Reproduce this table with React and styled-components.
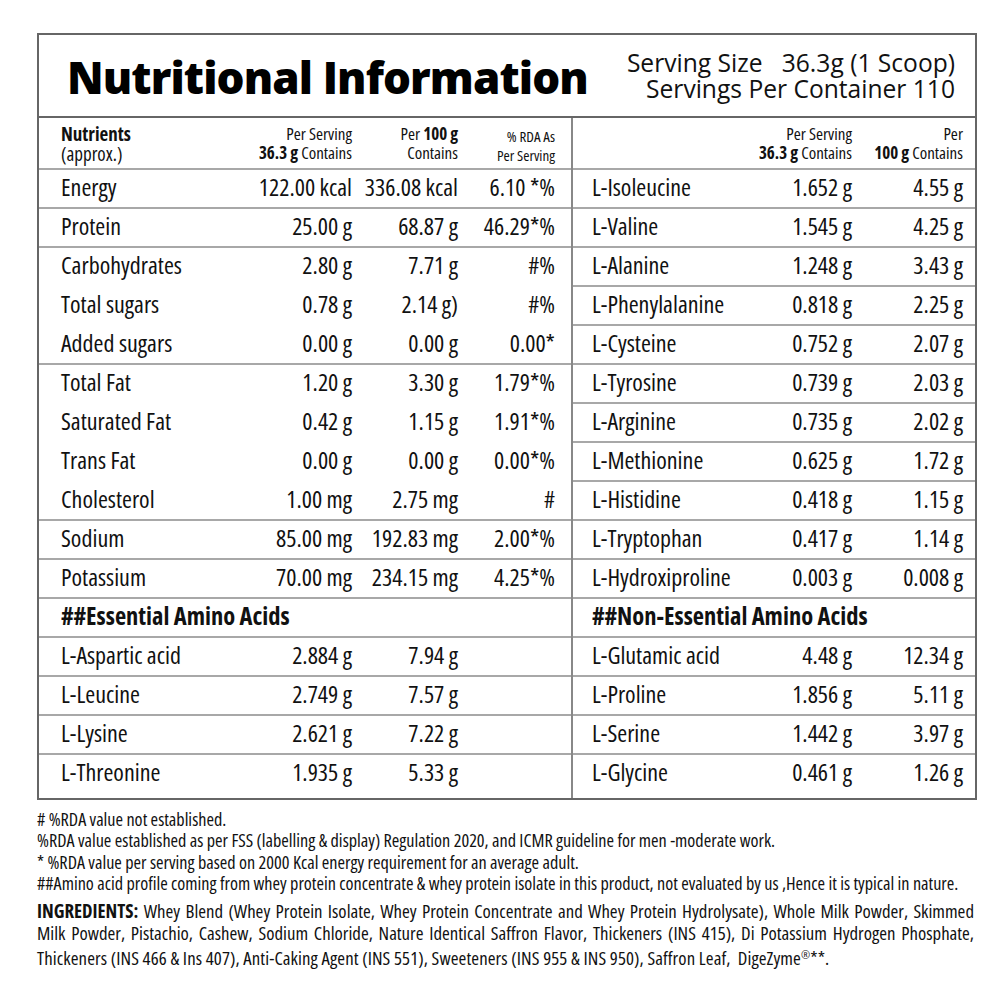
import React from "react";
import styled, { createGlobalStyle } from "styled-components";

const Global = createGlobalStyle`
  html, body { margin: 0; padding: 0; background: #fff; }
  body { font-family: "Open Sans", "Noto Sans", sans-serif; color: #111; }
`;

const Page = styled.div`
  width: 1000px;
  padding: 33px 0 0 37px;
  box-sizing: border-box;
`;

const Label = styled.div`
  width: 940px;
  box-sizing: border-box;
  border: 2px solid #666;
`;

const Header = styled.header`
  height: 83px;
  box-sizing: border-box;
  display: flex;
  align-items: center;
  justify-content: space-between;
  padding: 0 20px 2px 28px;
  border-bottom: 2px solid #666;
  white-space: nowrap;
`;

const Title = styled.h1`
  margin: 0;
  font-family: "Open Sans", sans-serif;
  font-weight: 800;
  font-size: 44px;
  letter-spacing: -0.9px;
  line-height: 1;
  color: #000;
  padding-top: 4px;
`;

const Serving = styled.div`
  text-align: right;
  font-size: 24.6px;
  font-weight: 400;
  line-height: 26px;
  color: #111;
  padding-top: 2px;
`;

const Body = styled.div`
  display: grid;
  grid-template-columns: 532px 1fr;
`;

const Panel = styled.section`
  border-left: ${(p) => (p.$divider ? "2px solid #888" : "none")};
  padding-bottom: 4px;
`;

const Row = styled.div`
  display: grid;
  grid-template-columns: ${(p) => p.$cols};
  padding: ${(p) => p.$pad};
  height: ${(p) => p.$h || 39}px;
  box-sizing: border-box;
  align-items: center;
  border-bottom: ${(p) => (p.$line ? "2px solid #a8a8a8" : "2px solid transparent")};
  font-stretch: 75%;
  font-size: 24px;
  line-height: 28px;
  white-space: nowrap;
  & > * { padding-bottom: 4px; }
`;

const HeadRow = styled(Row)`
  align-items: start;
  & > * { padding-bottom: 0; }
`;

const Name = styled.span`
  text-align: left;
  font-weight: ${(p) => (p.$bold ? 700 : 400)};
  font-size: ${(p) => (p.$bold ? "24.5px" : "24px")};
`;

const Val = styled.span`
  text-align: right;
`;

const HeadCell = styled.div`
  text-align: ${(p) => (p.$left ? "left" : "right")};
  font-size: ${(p) => (p.$small ? "15px" : p.$left ? "19px" : "17px")};
  line-height: ${(p) => (p.$left ? "20px" : "19px")};
  padding-top: ${(p) => (p.$small ? "3px" : "0")};
  b { font-weight: 700; }
`;

const Notes = styled.div`
  padding: 9px 0 0 0;
  width: 940px;
  font-size: 18.2px;
  font-stretch: 75%;
  line-height: 21.3px;
  color: #111;
`;

const Note = styled.div`
  white-space: nowrap;
`;

const Ingredients = styled.div`
  margin-top: 7px;
  width: 937px;
  font-size: 18.8px;
  font-stretch: 75%;
  line-height: 21.6px;
  color: #111;
  b { font-weight: 700; }
`;

const IngLine = styled.div`
  white-space: nowrap;
  text-align: ${(p) => (p.$justify ? "justify" : "left")};
  text-align-last: ${(p) => (p.$justify ? "justify" : "left")};
  letter-spacing: ${(p) => (p.$justify ? "0" : "0.1px")};
`;

const Reg = styled.span`
  font-size: 11px;
  vertical-align: 6px;
`;

const LEFT_COLS = "171px 120px 106px 97px";
const LEFT_PAD = "0 0 0 22px";
const RIGHT_COLS = "150px 110px 111px";
const RIGHT_PAD = "0 0 0 19px";

const left = [
  ["Energy", "122.00 kcal", "336.08 kcal", "6.10 *%", true],
  ["Protein", "25.00 g", "68.87 g", "46.29*%", true],
  ["Carbohydrates", "2.80 g", "7.71 g", "#%", false],
  ["Total sugars", "0.78 g", "2.14 g)", "#%", false],
  ["Added sugars", "0.00 g", "0.00 g", "0.00*", true],
  ["Total Fat", "1.20 g", "3.30 g", "1.79*%", false],
  ["Saturated Fat", "0.42 g", "1.15 g", "1.91*%", false],
  ["Trans Fat", "0.00 g", "0.00 g", "0.00*%", false],
  ["Cholesterol", "1.00 mg", "2.75 mg", "#", true],
  ["Sodium", "85.00 mg", "192.83 mg", "2.00*%", true],
  ["Potassium", "70.00 mg", "234.15 mg", "4.25*%", true],
];

const essential = [
  ["L-Aspartic acid", "2.884 g", "7.94 g", true],
  ["L-Leucine", "2.749 g", "7.57 g", true],
  ["L-Lysine", "2.621 g", "7.22 g", true],
  ["L-Threonine", "1.935 g", "5.33 g", false],
];

const right = [
  ["L-Isoleucine", "1.652 g", "4.55 g"],
  ["L-Valine", "1.545 g", "4.25 g"],
  ["L-Alanine", "1.248 g", "3.43 g"],
  ["L-Phenylalanine", "0.818 g", "2.25 g"],
  ["L-Cysteine", "0.752 g", "2.07 g"],
  ["L-Tyrosine", "0.739 g", "2.03 g"],
  ["L-Arginine", "0.735 g", "2.02 g"],
  ["L-Methionine", "0.625 g", "1.72 g"],
  ["L-Histidine", "0.418 g", "1.15 g"],
  ["L-Tryptophan", "0.417 g", "1.14 g"],
  ["L-Hydroxiproline", "0.003 g", "0.008 g"],
];

const nonEssential = [
  ["L-Glutamic acid", "4.48 g", "12.34 g", true],
  ["L-Proline", "1.856 g", "5.11 g", true],
  ["L-Serine", "1.442 g", "3.97 g", true],
  ["L-Glycine", "0.461 g", "1.26 g", false],
];

export default function App() {
  return (
    <Page>
      <Global />
      <Label>
        <Header>
          <Title>Nutritional Information</Title>
          <Serving>
            <div>Serving Size&nbsp;&nbsp; 36.3g (1 Scoop)</div>
            <div>Servings Per Container 110</div>
          </Serving>
        </Header>
        <Body>
          <Panel>
            <HeadRow $cols={LEFT_COLS} $pad={"6px 0 0 22px"} $h={52} $line>
              <HeadCell $left>
                <b>Nutrients</b>
                <br />
                (approx.)
              </HeadCell>
              <HeadCell>
                Per Serving
                <br />
                <b>36.3 g</b> Contains
              </HeadCell>
              <HeadCell>
                Per <b>100 g</b>
                <br />
                Contains
              </HeadCell>
              <HeadCell $small>
                % RDA As
                <br />
                Per Serving
              </HeadCell>
            </HeadRow>
            {left.map(([n, a, b, c, line]) => (
              <Row key={n} $cols={LEFT_COLS} $pad={LEFT_PAD} $line={line}>
                <Name>{n}</Name>
                <Val>{a}</Val>
                <Val>{b}</Val>
                <Val>{c}</Val>
              </Row>
            ))}
            <Row $cols="1fr" $pad={LEFT_PAD} $line>
              <Name $bold>##Essential Amino Acids</Name>
            </Row>
            {essential.map(([n, a, b, line]) => (
              <Row key={n} $cols={LEFT_COLS} $pad={LEFT_PAD} $line={line}>
                <Name>{n}</Name>
                <Val>{a}</Val>
                <Val>{b}</Val>
                <Val />
              </Row>
            ))}
          </Panel>
          <Panel $divider>
            <HeadRow $cols={RIGHT_COLS} $pad={"6px 0 0 19px"} $h={52} $line>
              <HeadCell $left />
              <HeadCell>
                Per Serving
                <br />
                <b>36.3 g</b> Contains
              </HeadCell>
              <HeadCell>
                Per
                <br />
                <b>100 g</b> Contains
              </HeadCell>
            </HeadRow>
            {right.map(([n, a, b]) => (
              <Row key={n} $cols={RIGHT_COLS} $pad={RIGHT_PAD} $line>
                <Name>{n}</Name>
                <Val>{a}</Val>
                <Val>{b}</Val>
              </Row>
            ))}
            <Row $cols="1fr" $pad={RIGHT_PAD} $line>
              <Name $bold>##Non-Essential Amino Acids</Name>
            </Row>
            {nonEssential.map(([n, a, b, line]) => (
              <Row key={n} $cols={RIGHT_COLS} $pad={RIGHT_PAD} $line={line}>
                <Name>{n}</Name>
                <Val>{a}</Val>
                <Val>{b}</Val>
              </Row>
            ))}
          </Panel>
        </Body>
      </Label>
      <Notes>
        <Note># %RDA value not established.</Note>
        <Note>%RDA value established as per FSS (labelling &amp; display) Regulation 2020, and ICMR guideline for men -moderate work.</Note>
        <Note>* %RDA value per serving based on 2000 Kcal energy requirement for an average adult.</Note>
        <Note>##Amino acid profile coming from whey protein concentrate &amp; whey protein isolate in this product, not evaluated by us ,Hence it is typical in nature.</Note>
      </Notes>
      <Ingredients>
        <IngLine $justify>
          <b>INGREDIENTS:</b> Whey Blend (Whey Protein Isolate, Whey Protein Concentrate and Whey Protein Hydrolysate), Whole Milk Powder, Skimmed
        </IngLine>
        <IngLine $justify>
          Milk Powder, Pistachio, Cashew, Sodium Chloride, Nature Identical Saffron Flavor, Thickeners (INS 415), Di Potassium Hydrogen Phosphate,
        </IngLine>
        <IngLine>
          Thickeners (INS 466 &amp; Ins 407), Anti-Caking Agent (INS 551), Sweeteners (INS 955 &amp; INS 950), Saffron Leaf,&nbsp; DigeZyme<Reg>®</Reg>**.
        </IngLine>
      </Ingredients>
    </Page>
  );
}
